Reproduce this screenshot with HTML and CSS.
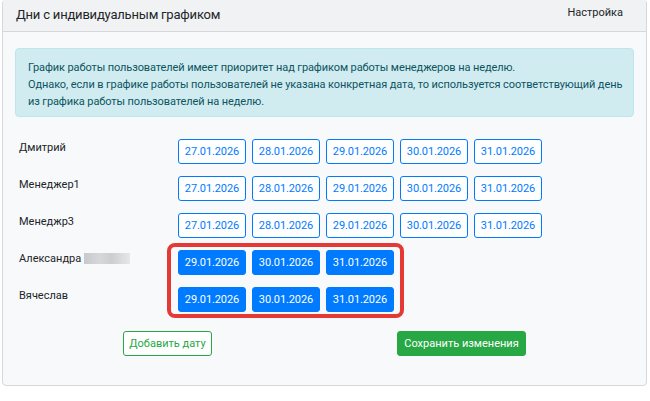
FILE: index.html
```html
<!DOCTYPE html>
<html lang="ru">
  <head>
    <meta charset="UTF-8" />
    <title>Дни с индивидуальным графиком</title>
    <link rel="stylesheet" href="styles.css">
  </head>
  <body>
    <div class="card">
      <div class="card-header">
        <h2>Дни с индивидуальным графиком</h2>
        <a class="header-link" href="#">Настройка</a>
      </div>

      <div class="card-body">
        <div class="alert">
          График работы пользователей имеет приоритет над графиком работы менеджеров на неделю.<br>
          Однако, если в графике работы пользователей не указана конкретная дата, то используется соответствующий день<br>
          из графика работы пользователей на неделю.
        </div>

        <div class="schedule">
          <div class="user-row">
            <div class="user-name">Дмитрий</div>
            <div class="dates">
              <button class="date-btn">27.01.2026</button>
              <button class="date-btn">28.01.2026</button>
              <button class="date-btn">29.01.2026</button>
              <button class="date-btn">30.01.2026</button>
              <button class="date-btn">31.01.2026</button>
            </div>
          </div>
          <div class="user-row">
            <div class="user-name">Менеджер1</div>
            <div class="dates">
              <button class="date-btn">27.01.2026</button>
              <button class="date-btn">28.01.2026</button>
              <button class="date-btn">29.01.2026</button>
              <button class="date-btn">30.01.2026</button>
              <button class="date-btn">31.01.2026</button>
            </div>
          </div>
          <div class="user-row">
            <div class="user-name">Менеджр3</div>
            <div class="dates">
              <button class="date-btn">27.01.2026</button>
              <button class="date-btn">28.01.2026</button>
              <button class="date-btn">29.01.2026</button>
              <button class="date-btn">30.01.2026</button>
              <button class="date-btn">31.01.2026</button>
            </div>
          </div>
          <div class="user-row">
            <div class="user-name">Александра <span class="blurred"></span></div>
            <div class="dates">
              <button class="date-btn active">29.01.2026</button>
              <button class="date-btn active">30.01.2026</button>
              <button class="date-btn active">31.01.2026</button>
            </div>
          </div>
          <div class="user-row">
            <div class="user-name">Вячеслав</div>
            <div class="dates">
              <button class="date-btn active">29.01.2026</button>
              <button class="date-btn active">30.01.2026</button>
              <button class="date-btn active">31.01.2026</button>
            </div>
          </div>

          <!-- annotation frame -->
          <div class="highlight"></div>
        </div>

        <div class="actions">
          <button class="btn-outline-success">Добавить дату</button>
          <button class="btn-success">Сохранить изменения</button>
        </div>
      </div>
    </div>

    <div class="card next-card"></div>
  </body>
</html>
```

FILE: styles.css
```css
* {
  margin: 0;
  padding: 0;
  box-sizing: border-box;
}

body {
  font-family: Roboto, "Noto Sans", sans-serif;
  background: #ffffff;
  color: #212529;
  padding: 0 3px 0 2px;
  overflow: hidden;
}

.card {
  background: #f8f9fa;
  border: 1px solid #d6d8db;
  border-radius: 4px;
  margin-top: -1px;
}

.card-header {
  display: flex;
  justify-content: space-between;
  align-items: center;
  height: 32px;
  padding: 0 23px 2px 13px;
  background: #f1f2f3;
  border-bottom: 1px solid #d6d8db;
}

.card-header h2 {
  font-size: 13px;
  font-weight: 400;
  letter-spacing: -0.2px;
  color: #212529;
}

.header-link {
  font-size: 11px;
  color: #212529;
  text-decoration: none;
  margin-top: -5px;
}

.card-body {
  padding: 16px 12px 29px 12px;
}

.alert {
  background: #d1ecf1;
  border: 1px solid #bee5eb;
  border-radius: 4px;
  color: #0c5460;
  font-size: 11px;
  letter-spacing: -0.1px;
  line-height: 17px;
  white-space: nowrap;
  padding: 10px 12px 6px 12px;
}

.schedule {
  position: relative;
  margin-top: 22px;
}

.user-row {
  display: flex;
  align-items: flex-start;
  margin-bottom: 12px;
}

.user-name {
  width: 163px;
  padding-left: 4px;
  font-size: 11px;
  line-height: 17px;
  display: flex;
  align-items: center;
}

.blurred {
  display: inline-block;
  width: 46px;
  height: 11px;
  margin-left: 3px;
  background: linear-gradient(90deg, #c8c9cc 0%, #d6d7d9 35%, #cdced0 60%, #e6e7e8 100%);
}

.dates {
  display: flex;
  gap: 6px;
}

.date-btn {
  width: 68px;
  height: 25px;
  border: 1px solid #007bff;
  border-radius: 3px;
  background: #ffffff;
  color: #007bff;
  font-family: inherit;
  font-size: 11px;
  letter-spacing: -0.1px;
}

.date-btn.active {
  background: #007bff;
  color: #ffffff;
}

.highlight {
  position: absolute;
  left: 152px;
  top: 104px;
  width: 237px;
  height: 75px;
  border: 4px solid #e53935;
  border-radius: 8px;
  pointer-events: none;
}

.actions {
  display: flex;
  margin-top: 19px;
  padding-left: 108px;
}

.btn-outline-success {
  width: 89px;
  height: 25px;
  border: 1px solid #28a745;
  border-radius: 3px;
  background: #ffffff;
  color: #28a745;
  font-family: inherit;
  font-size: 11px;
}

.btn-success {
  width: 129px;
  height: 25px;
  margin-left: 185px;
  border: 1px solid #28a745;
  border-radius: 3px;
  background: #28a745;
  color: #ffffff;
  font-family: inherit;
  font-size: 11px;
}

.next-card {
  margin-top: 15px;
  height: 40px;
}
```
